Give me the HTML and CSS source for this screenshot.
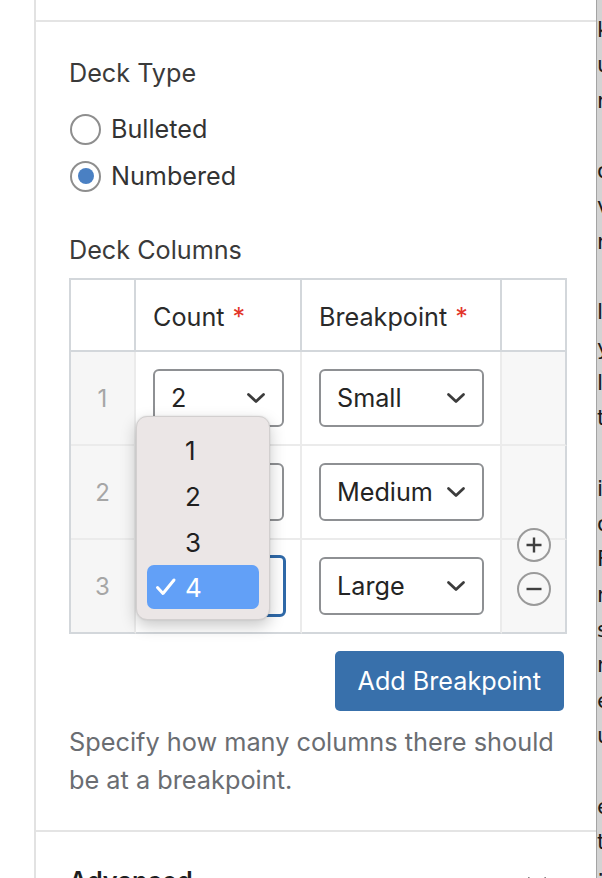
FILE: index.html
```html
<!DOCTYPE html>
<html lang="en">
<head>
<meta charset="utf-8">
<title>Deck settings</title>
<link rel="stylesheet" href="styles.css">
</head>
<body>
<div class="page">
  <div class="panel">
    <div class="prev"></div>
    <section class="settings">
      <div class="label">Deck Type</div>
      <div class="radios">
        <div class="radio"><span class="dot"></span><span>Bulleted</span></div>
        <div class="radio checked"><span class="dot"></span><span>Numbered</span></div>
      </div>
      <div class="label cols-label">Deck Columns</div>
      <div class="deck">
        <div class="cell head idx"></div>
        <div class="cell head"><span>Count <span class="req">*</span></span></div>
        <div class="cell head"><span>Breakpoint <span class="req">*</span></span></div>
        <div class="cell head act"></div>

        <div class="cell idx">1</div>
        <div class="cell"><div class="select count"><span>2</span><svg class="chev" width="20" height="12" viewBox="0 0 20 12"><path d="M2.5 2.5 L10 9.5 L17.5 2.5"/></svg></div></div>
        <div class="cell"><div class="select bp"><span>Small</span><svg class="chev" width="20" height="12" viewBox="0 0 20 12"><path d="M2.5 2.5 L10 9.5 L17.5 2.5"/></svg></div></div>
        <div class="cell act"></div>

        <div class="cell idx">2</div>
        <div class="cell"><div class="select count"><span>3</span><svg class="chev" width="20" height="12" viewBox="0 0 20 12"><path d="M2.5 2.5 L10 9.5 L17.5 2.5"/></svg></div></div>
        <div class="cell"><div class="select bp"><span>Medium</span><svg class="chev" width="20" height="12" viewBox="0 0 20 12"><path d="M2.5 2.5 L10 9.5 L17.5 2.5"/></svg></div></div>
        <div class="cell act"></div>

        <div class="cell idx last">3</div>
        <div class="cell last"><div class="select count focus"><span>4</span><svg class="chev" width="20" height="12" viewBox="0 0 20 12"><path d="M2.5 2.5 L10 9.5 L17.5 2.5"/></svg></div></div>
        <div class="cell last"><div class="select bp"><span>Large</span><svg class="chev" width="20" height="12" viewBox="0 0 20 12"><path d="M2.5 2.5 L10 9.5 L17.5 2.5"/></svg></div></div>
        <div class="cell act last"></div>

        <div class="stepper">
          <div class="circle"><svg width="18" height="18" viewBox="0 0 18 18"><path d="M9 1.5 V16.5 M1.5 9 H16.5"/></svg></div>
          <div class="circle"><svg width="18" height="18" viewBox="0 0 18 18"><path d="M1.5 9 H16.5"/></svg></div>
        </div>

        <div class="popup">
          <div class="opt"><span class="check"></span><span>1</span></div>
          <div class="opt"><span class="check"></span><span>2</span></div>
          <div class="opt"><span class="check"></span><span>3</span></div>
          <div class="opt sel"><span class="check"><svg width="22" height="20" viewBox="0 0 22 20"><path d="M2.5 10.5 L8 16.5 L19 3"/></svg></span><span>4</span></div>
        </div>
      </div>
      <div class="actions"><div class="btn">Add Breakpoint</div></div>
      <p class="help">Specify how many columns there should be at a breakpoint.</p>
    </section>
    <section class="advanced">
      <div class="adv-title">Advanced</div>
      <svg class="adv-chev" width="24" height="14" viewBox="0 0 24 14"><path d="M3 3 L12 11 L21 3"/></svg>
    </section>
  </div>
  <div class="edge">
    <div>k</div><div>u</div><div>ri</div><div>&nbsp;</div>
    <div>o</div><div>v</div><div>n</div><div>&nbsp;</div>
    <div>l</div><div>y</div><div>li</div><div>t</div><div>&nbsp;</div>
    <div>i</div><div>o</div><div>F</div><div>n</div><div>s</div><div>n</div><div>e</div><div>u</div><div>&nbsp;</div>
    <div>e</div><div>t</div><div>:</div>
  </div>
</div>
</body>
</html>
```

FILE: styles.css
```css
* { box-sizing: border-box; }

html, body {
  margin: 0;
  padding: 0;
  background: #ffffff;
}

body {
  width: 602px;
  height: 878px;
  overflow: hidden;
  font-family: Inter, "Noto Sans", sans-serif;
  font-size: 25.2px;
  color: #2c2c2c;
}

.page {
  display: flex;
  height: 878px;
}

.panel {
  margin-left: 34px;
  width: 562px;
  border-left: 2px solid #e2e2e2;
  flex: none;
}

.prev {
  height: 20px;
}

.settings {
  border-top: 2px solid #e4e4e4;
  padding: 35px 29px 31px 33px;
}

.label {
  line-height: 32px;
  color: #3a3a3a;
}

.radios {
  margin-top: 20px;
  display: flex;
  flex-direction: column;
  gap: 7px;
}

.radio {
  height: 40px;
  display: flex;
  align-items: center;
  gap: 10px;
  color: #333333;
  padding-left: 1px;
}

.dot {
  width: 31px;
  height: 31px;
  border-radius: 50%;
  border: 2px solid #8e8e8e;
  background: #ffffff;
  display: flex;
  align-items: center;
  justify-content: center;
}

.checked .dot::after {
  content: "";
  width: 16px;
  height: 16px;
  border-radius: 50%;
  background: #4a80c3;
}

.cols-label {
  margin-top: 38px;
}

.deck {
  margin-top: 12px;
  position: relative;
  width: 498px;
  display: grid;
  grid-template-columns: 65px 166px 200px 65px;
  grid-template-rows: 72px 94px 94px 94px;
  border-top: 2px solid #d3d7db;
  border-left: 2px solid #d3d7db;
}

.cell {
  border-right: 2px solid #ebebeb;
  border-bottom: 2px solid #ebebeb;
  display: flex;
  align-items: center;
  padding-left: 17px;
  background: #ffffff;
}

.cell.head {
  border-right-color: #d3d7db;
  border-bottom-color: #d3d7db;
  color: #2a2a2a;
  padding-top: 4px;
}

.cell.act {
  border-right-color: #d3d7db;
  background: #f7f7f7;
}

.cell.head.act {
  background: #ffffff;
}

.cell.last {
  border-bottom-color: #d3d7db;
}

.cell.idx {
  padding-left: 0;
  justify-content: center;
  background: #f6f6f6;
  color: #a6a6a6;
  font-size: 24px;
}

.cell.head.idx {
  background: #ffffff;
}

.req {
  color: #e2352a;
  margin-left: 1px;
}

.select {
  height: 58px;
  border: 2px solid #8e9093;
  border-radius: 6px;
  background: #ffffff;
  display: flex;
  align-items: center;
  justify-content: space-between;
  padding: 0 16px 0 16px;
  color: #242424;
}

.select.count { width: 131px; }
.select.bp { width: 165px; }

.select.focus {
  border: 3px solid #2f69a8;
  height: 62px;
  width: 133px;
}

.chev {
  flex: none;
  fill: none;
  stroke: #3c3c3c;
  stroke-width: 2.8;
  stroke-linecap: round;
  stroke-linejoin: round;
}

.stepper {
  position: absolute;
  left: 446px;
  top: 248px;
  display: flex;
  flex-direction: column;
  gap: 10px;
}

.circle {
  width: 34px;
  height: 34px;
  border-radius: 50%;
  border: 2px solid #9a9a9a;
  background: #f7f7f7;
  display: flex;
  align-items: center;
  justify-content: center;
}

.circle svg {
  fill: none;
  stroke: #3f3f3f;
  stroke-width: 2.4;
}

.popup {
  position: absolute;
  left: 65px;
  top: 136px;
  width: 134px;
  height: 204px;
  background: #ebe6e6;
  border: 1px solid #d2cfcf;
  border-radius: 11px;
  box-shadow: 0 6px 16px rgba(0, 0, 0, 0.22), 0 0 2px rgba(0, 0, 0, 0.12);
  padding: 10px 10px 8px 10px;
  display: flex;
  flex-direction: column;
  font-size: 26px;
}

.opt {
  height: 46px;
  display: flex;
  align-items: center;
  padding-left: 8px;
  color: #1f1f1f;
  border-radius: 7px;
}

.opt.sel {
  background: #62a0f7;
  color: #ffffff;
  height: 44px;
}

.check {
  width: 30px;
  display: flex;
  align-items: center;
}

.check svg {
  fill: none;
  stroke: #ffffff;
  stroke-width: 3;
  stroke-linecap: round;
  stroke-linejoin: round;
}

.actions {
  margin-top: 17px;
  display: flex;
  justify-content: flex-end;
  padding-right: 3px;
}

.btn {
  height: 60px;
  padding: 0 23px;
  background: #3870ab;
  color: #ffffff;
  border-radius: 5px;
  display: flex;
  align-items: center;
}

.help {
  margin: 12px 0 0 0;
  font-size: 25.3px;
  line-height: 38px;
  color: #6a6d72;
}

.advanced {
  border-top: 2px solid #e4e4e4;
  padding: 33px 29px 0 33px;
  display: flex;
  justify-content: space-between;
  align-items: flex-start;
}

.adv-title {
  line-height: 32px;
  font-weight: 600;
  color: #1e1e1e;
}

.adv-chev {
  margin-top: 10px;
  margin-right: 18px;
  fill: none;
  stroke: #333333;
  stroke-width: 2.5;
}

.edge {
  flex: 1;
  background: #d3d3d3;
  border-left: 1px solid #a4a4a4;
  overflow: hidden;
  padding-top: 12px;
  font-family: "DejaVu Sans", sans-serif;
  font-size: 22px;
  line-height: 35.3px;
  color: #1a1a1a;
  white-space: nowrap;
}
```
